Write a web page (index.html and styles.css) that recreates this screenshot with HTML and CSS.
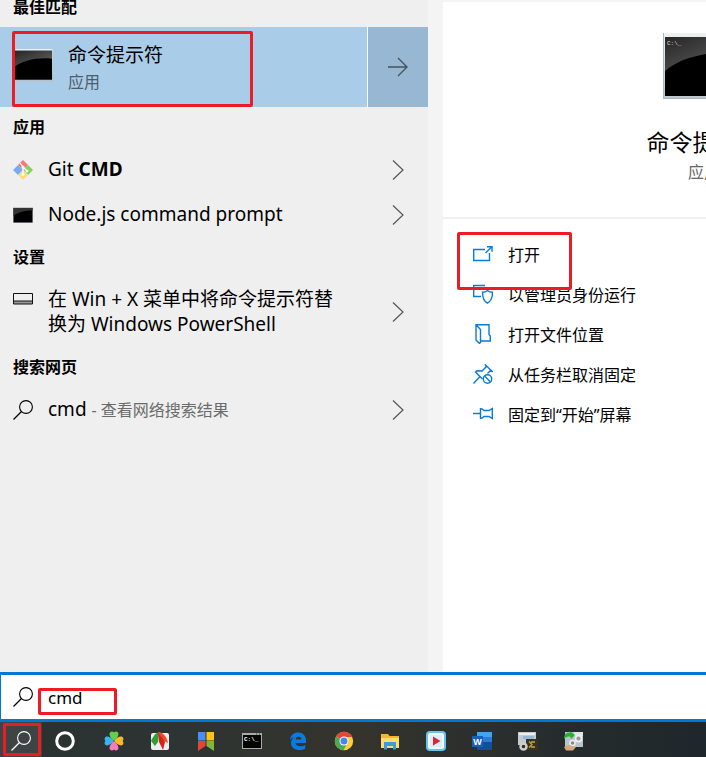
FILE: index.html
```html
<!DOCTYPE html>
<html lang="zh-CN">
<head>
    <meta charset="UTF-8">
    <meta name="viewport" content="width=device-width, initial-scale=1.0">
    <title>搜索</title>
    <link rel="stylesheet" href="styles.css">
</head>
<body>
    <!-- Shared icon shapes -->
    <svg class="sprite" aria-hidden="true">
        <defs>
            <linearGradient id="gloss" x1="0" y1="0" x2="1" y2="1">
                <stop offset="0" stop-color="#262626"/>
                <stop offset="1" stop-color="#666"/>
            </linearGradient>
            <linearGradient id="frame" x1="0" y1="0" x2="0" y2="1">
                <stop offset="0" stop-color="#eef1f2"/>
                <stop offset="1" stop-color="#bcc5cd"/>
            </linearGradient>
        </defs>
        <symbol id="console" viewBox="0 0 82 66">
            <rect width="82" height="66" rx="1" fill="url(#frame)"/>
            <path d="M.5 0v65.5h81V0" fill="none" stroke="#aab5bf"/>
            <path d="M2 4h78v59H2z" fill="#000"/>
            <path d="M2 4h78v16C48 17 18 24 2 38z" fill="url(#gloss)"/>
        </symbol>
        <symbol id="chevron" viewBox="0 0 12 20">
            <path d="M1 .5l10 9.5L1 19.5" fill="none" stroke="#555" stroke-width="1.2"/>
        </symbol>
        <symbol id="search" viewBox="0 0 20 20">
            <circle cx="13" cy="7" r="6.4" fill="none" stroke="currentColor" stroke-width="1.1"/>
            <path d="M8.500 11.500L.5 19.500" fill="none" stroke="currentColor" stroke-width="1.2"/>
        </symbol>
    </svg>

    <main class="panels">
        <!-- Results -->
        <section class="results">
            <h2 class="group-title">最佳匹配</h2>
            <div class="best-match">
                <button class="best-main">
                    <svg class="best-icon"><use href="#console"/></svg>
                    <span class="best-text">
                        <span class="best-name">命令提示符</span>
                        <span class="best-type">应用</span>
                    </span>
                </button>
                <button class="best-arrow" aria-label="展开">
                    <svg width="20" height="20" viewBox="0 0 20 20"><path d="M0 10h19M10 1l9 9-9 9" fill="none" stroke="#44545f" stroke-width="1.4"/></svg>
                </button>
                <span class="mark mark-best"></span>
            </div>

            <h2 class="group-title">应用</h2>
            <button class="result">
                <svg class="icon" viewBox="0 0 20 20">
                    <path d="M10 0l5 5-5 5-5-5z" fill="#f4777b"/>
                    <path d="M5 5l5 5-5 5-5-5z" fill="#76acf7"/>
                    <path d="M15 5l5 5-5 5-5-5z" fill="#82d05e"/>
                    <path d="M10 10l5 5-5 5-5-5z" fill="#fbdc78"/>
                    <path d="M7 3l3 4v8M10 7l4 4" fill="none" stroke="#fff" stroke-width="1.2"/>
                    <circle cx="10" cy="7" r="1.500" fill="#fff"/>
                    <circle cx="14" cy="11" r="1.500" fill="#fff"/>
                    <circle cx="10" cy="14.500" r="1.500" fill="#fff"/>
                </svg>
                <span class="result-text">Git <b>CMD</b></span>
                <svg class="chevron"><use href="#chevron"/></svg>
            </button>
            <button class="result">
                <svg class="icon" viewBox="0 0 20 20">
                    <path d="M0 2h20v16H0z" fill="#c3cad6"/>
                    <path d="M.5 3h19v14.500H.5z" fill="#000"/>
                    <path d="M.5 3h19v2.500C12 5.500 5 7 .5 11z" fill="#333"/>
                </svg>
                <span class="result-text">Node.js command prompt</span>
                <svg class="chevron"><use href="#chevron"/></svg>
            </button>

            <h2 class="group-title">设置</h2>
            <button class="result">
                <svg class="icon icon-top" viewBox="0 0 20 20">
                    <path d="M1 12h18v3H1z" fill="#999"/>
                    <path d="M.5 4.500h19v10.500H.5zM1 12h18" fill="none" stroke="#111"/>
                </svg>
                <span class="result-text">在 Win + X 菜单中将命令提示符替换为 Windows PowerShell</span>
                <svg class="chevron"><use href="#chevron"/></svg>
            </button>

            <h2 class="group-title">搜索网页</h2>
            <button class="result">
                <svg class="icon"><use href="#search"/></svg>
                <span class="result-text">cmd <span class="hint">- 查看网络搜索结果</span></span>
                <svg class="chevron"><use href="#chevron"/></svg>
            </button>
        </section>

        <!-- Selected app -->
        <section class="detail">
            <div class="app">
                <svg class="app-icon" viewBox="0 0 82 66">
                    <use href="#console"/>
                    <text x="4" y="12" font-family="Liberation Mono" font-size="6" fill="#ddd">C:\_</text>
                </svg>
                <h1 class="app-name">命令提示符</h1>
                <p class="app-type">应用</p>
            </div>
            <div class="actions">
                <button class="action">
                    <svg class="icon" viewBox="0 0 20 20"><path d="M12 5.500H.7v11h15.800V9M12.500 9l6-6M14 2.700h5v5"/></svg>
                    打开
                </button>
                <button class="action">
                    <svg class="icon" viewBox="0 0 20 20"><path d="M12 1.500H.7v11H8M16.500 5V3M14.500 6.500c1.500 1.300 3 1.700 5 1.700 0 5-.8 8.800-5 11-4.200-2.200-5-6-5-11 2 0 3.500-.4 5-1.700z"/></svg>
                    以管理员身份运行
                </button>
                <button class="action">
                    <svg class="icon" viewBox="0 0 20 20"><path d="M3 .7h13v9.800l1.300 1.500v5H7.500M3 .7v15.300l3.500 3.500 1-1V5.500L3 .7z"/></svg>
                    打开文件位置
                </button>
                <button class="action">
                    <svg class="icon" viewBox="0 0 20 20"><path d="M.5 19.500l6.500-7M9.500 15L2.500 8l1.500-1.200 5 .2 4-4-.5-2 6.500 6.300-2-.3-2.500 2.500"/><circle cx="14.500" cy="15" r="4.200"/><path d="M11.500 12l6 6"/></svg>
                    从任务栏取消固定
                </button>
                <button class="action">
                    <svg class="icon" viewBox="0 0 20 20"><path d="M0 9.500h7.500M7.500 4v11M7.500 5h1.500l2 1.500h5L19.300 4.500v10L16 12.500h-5l-2 1.500H7.500"/></svg>
                    固定到“开始”屏幕
                </button>
                <span class="mark mark-open"></span>
            </div>
        </section>
    </main>

    <!-- Search box -->
    <div class="search-bar">
        <label for="query" aria-label="搜索"><svg class="icon"><use href="#search"/></svg></label>
        <input id="query" class="search-input" type="text" value="cmd">
        <span class="mark mark-query"></span>
    </div>

    <!-- Taskbar -->
    <nav class="taskbar">
        <button class="task task-search" aria-label="搜索">
            <svg class="icon"><use href="#search"/></svg>
            <span class="mark mark-task"></span>
        </button>
        <button class="task task-cortana" aria-label="Cortana">
            <svg class="icon" viewBox="0 0 20 20"><circle cx="10" cy="10" r="8.300" fill="none" stroke="#fff" stroke-width="3"/></svg>
        </button>
        <button class="task" aria-label="四叶草">
            <svg class="icon" viewBox="0 0 20 20">
                <path d="M10 9.800C7 8 4.500 3.500 6 1.500 7.500 0 9 .5 10 1.500 11 .5 12.500 0 14 1.500 15.500 3.500 13 8 10 9.800z" fill="#63cf4b"/>
                <path d="M9.800 10C8 13 3.500 15.500 1.500 14 0 12.500.5 11 1.500 10 .5 9 0 7.500 1.500 6 3.500 4.500 8 7 9.800 10z" fill="#3bb4ee"/>
                <path d="M10.200 10c1.800-3 6.300-5.500 8.300-4 1.500 1.500 1 3 0 4 1 1 1.500 2.500 0 4-2 1.500-6.500-1-8.300-4z" fill="#f9b928"/>
                <path d="M10 10.200c3 1.800 5.500 6.300 4 8.300-1.500 1.500-3 1-4 0-1 1-2.500 1.500-4 0-1.500-2 1-6.500 4-8.300z" fill="#f77dba"/>
            </svg>
        </button>
        <button class="task" aria-label="录屏">
            <svg class="icon" viewBox="0 0 20 20">
                <rect x="1" y="2" width="18" height="17" rx="2" fill="#eee"/>
                <path d="M1 10C3 6 5 2 9 1l-1 10-3 4z" fill="#28a136"/>
                <path d="M8 1c6 0 9 6 10 11l-6-3z" fill="#f04b2d"/>
                <path d="M8 1l7 10-2 8-4-8z" fill="#d72018"/>
            </svg>
        </button>
        <button class="task" aria-label="书签">
            <svg class="icon" viewBox="0 0 20 20">
                <path d="M2 1h7.500v8.500H2z" fill="#4b8df8"/>
                <path d="M10.500 1H18v8.500h-7.500z" fill="#fdc413"/>
                <path d="M2 10h7.500v5L2 20z" fill="#ea4335"/>
                <path d="M10.500 10H18v10l-7.500-5z" fill="#7bb83c"/>
            </svg>
        </button>
        <button class="task" aria-label="命令提示符">
            <svg class="icon" viewBox="0 0 20 20">
                <path d="M0 2h20v16H0z" fill="#aaa"/>
                <path d="M1 4h18v13H1z" fill="#050505"/>
                <path d="M14 2.500h1v1h-1zM17 2.500h1v1h-1z" fill="#333"/>
                <text x="2" y="10" font-family="Liberation Mono" font-weight="bold" font-size="6" fill="#fff">C:\_</text>
            </svg>
        </button>
        <button class="task" aria-label="Edge">
            <svg class="icon" viewBox="0 0 20 20"><path d="M2 9C2.500 4 6 1.500 10 1.500c5 0 8 3.500 8 8V12H7.500c.2 2.200 2.500 3.300 5 3.300 1.700 0 3.300-.5 4.700-1.300v3.700c-1.700.9-3.700 1.300-5.700 1.300-5 0-8.500-2.700-8.500-7C3 9.300 4.500 7.200 6.800 6 5 6.300 3 7.500 2 9zm5.700-.5h5.600c0-1.700-.9-3-2.700-3s-2.700 1.300-2.900 3z" fill="#0a7be0" fill-rule="evenodd"/></svg>
        </button>
        <button class="task" aria-label="Chrome">
            <svg class="icon" viewBox="0 0 20 20">
                <circle cx="10" cy="10" r="9.200" fill="#fdd033"/>
                <path d="M10 10L2 5.500A9.200 9.200 0 0 1 18.300 6H10z" fill="#e1483b"/>
                <path d="M10 10L2 5.500A9.200 9.200 0 0 0 9.500 19.200l4-7.200z" fill="#4aaa55"/>
                <circle cx="10" cy="10" r="4.500" fill="#fff"/>
                <circle cx="10" cy="10" r="3.500" fill="#4688f1"/>
            </svg>
        </button>
        <button class="task" aria-label="文件资源管理器">
            <svg class="icon" viewBox="0 0 20 20">
                <path d="M1 3h7l1.500 2H19v12H1z" fill="#f4b62c"/>
                <path d="M1 7h18v10H1z" fill="#ffdc70"/>
                <path d="M4 18.500V11h12v7.500h-3V15H7v3.500z" fill="#3d9be0"/>
            </svg>
        </button>
        <button class="task" aria-label="播放器">
            <svg class="icon" viewBox="0 0 20 20">
                <rect x="1" y="1" width="18" height="18" rx="3" fill="#f5f8fc" stroke="#60c8ef" stroke-width="2"/>
                <rect x="4" y="4" width="12" height="12" rx="1" fill="#dcecf8"/>
                <path d="M7 5.500l7.500 4.500L7 14.500z" fill="#dd2434"/>
            </svg>
        </button>
        <button class="task" aria-label="Word">
            <svg class="icon" viewBox="0 0 20 20">
                <path d="M5 1h15v6H5z" fill="#41a5ee"/>
                <path d="M5 6h15v5H5z" fill="#2b7cd3"/>
                <path d="M5 11h15v8H5z" fill="#174b9b"/>
                <path d="M0 5h11v11H0z" fill="#1a5dbe"/>
                <text x="5.500" y="14" text-anchor="middle" font-family="Liberation Sans" font-weight="bold" font-size="9" fill="#fff">W</text>
            </svg>
        </button>
        <button class="task" aria-label="系统配置">
            <svg class="icon" viewBox="0 0 20 20">
                <path d="M0 1h18v13H0z" fill="#c4cbd0"/>
                <path d="M1 2h16v2H1z" fill="#eee"/>
                <path d="M5 5h11v3H5z" fill="#94b9d8"/>
                <path d="M8 8h12v11H8z" fill="#39321f"/>
                <path d="M11 10.500l3 3-3 3M13 11h4M13 16h4" stroke="#c9a83a" stroke-width="1.300" fill="none"/>
                <circle cx="5.500" cy="15.500" r="3" fill="none" stroke="#ccc" stroke-width="2.500"/>
            </svg>
        </button>
        <button class="task" aria-label="注册工具">
            <svg class="icon" viewBox="0 0 20 20">
                <path d="M1 1h18v15H1z" fill="#b7c4cc"/>
                <path d="M10 1h9v4h-9z" fill="#dfe5ea"/>
                <path d="M0 8c0-5 3-7 6-6l-.5-2L11 4 7 8 6.500 6C4 5 2 6 0 8z" fill="#24b52f"/>
                <circle cx="14.500" cy="7.500" r="3" fill="#999" stroke="#eee" stroke-width="1.800"/>
                <circle cx="8.500" cy="12" r="2.500" fill="#888" stroke="#eee" stroke-width="1.500"/>
                <path d="M0 16l5-2 7 2-3 3.500H2z" fill="#d8a87c"/>
            </svg>
        </button>
    </nav>
</body>
</html>
```
FILE: styles.css
```css
* {
    box-sizing: border-box;
}

body {
    margin: 0;
    min-height: 100vh;
    display: flex;
    flex-direction: column;
    font-family: "Noto Sans", "Noto Sans CJK SC", sans-serif;
    font-size: 16px;
    color: #000;
    background-color: #f4f4f4;
    overflow: hidden;
}

button {
    border: none;
    padding: 0;
    background: none;
    font: inherit;
    color: inherit;
    text-align: left;
    cursor: pointer;
}

.sprite {
    position: absolute;
    width: 0;
    height: 0;
}

.icon {
    display: block;
    width: 20px;
    height: 20px;
    flex-shrink: 0;
}

/* Red highlight frames */
.mark {
    position: absolute;
    border: 3px solid #ed1c24;
    border-radius: 2px;
    pointer-events: none;
}

.panels {
    flex: 1;
    display: flex;
    gap: 15px;
    overflow: hidden;
}

/* Results list, scrolled a little under the top edge */
.results {
    width: 428px;
    flex-shrink: 0;
    margin-top: -13px;
    background-color: #efefef;
}

.group-title {
    margin: 0;
    padding-left: 13px;
    font-size: 16px;
    font-weight: bold;
    line-height: 40px;
}

.best-match {
    position: relative;
    display: flex;
    gap: 1px;
    height: 80px;
    background-color: #fff;
}

.best-main {
    flex: 1;
    display: flex;
    align-items: center;
    gap: 15px;
    padding-left: 13px;
    background-color: #a9cce9;
}

.best-icon {
    width: 40px;
    height: 34px;
    margin-bottom: 4px;
}

.best-text {
    display: flex;
    flex-direction: column;
    padding-top: 2px;
}

.best-name {
    font-size: 19px;
    line-height: 28px;
}

.best-type {
    line-height: 26px;
    color: #4d5d6a;
}

.best-arrow {
    width: 60px;
    display: flex;
    align-items: center;
    justify-content: center;
    background-color: #97b7d2;
}

.mark-best {
    left: 12px;
    top: 4px;
    width: 241px;
    height: 76px;
}

.result {
    width: 100%;
    display: flex;
    align-items: center;
    gap: 15px;
    padding: 10px 24px 10px 13px;
    font-size: 19px;
    line-height: 25px;
}

.result-text {
    flex: 1;
    padding-right: 30px;
}

.icon-top {
    align-self: flex-start;
    margin-top: 2px;
}

.hint {
    font-size: 16px;
    color: #6b6b6b;
}

.chevron {
    width: 12px;
    height: 20px;
    flex-shrink: 0;
}

/* Detail pane keeps its width and runs past the window */
.detail {
    flex: 1;
    min-width: 522px;
    margin-top: 2px;
    background-color: #fff;
}

.app {
    display: flex;
    flex-direction: column;
    align-items: center;
    padding: 31px 0 32px;
    border-bottom: 2px solid #f0f0f0;
}

.app-icon {
    width: 82px;
    height: 66px;
}

.app-name {
    margin: 26px 0 0;
    font-size: 23px;
    font-weight: normal;
    line-height: 34px;
}

.app-type {
    margin: 0;
    line-height: 26px;
    color: #666;
}

.actions {
    position: relative;
    display: flex;
    flex-direction: column;
    padding: 15px 30px;
}

.action {
    display: flex;
    align-items: center;
    gap: 15px;
    height: 40px;
}

.action .icon {
    fill: none;
    stroke: #0a7bd8;
    stroke-width: 1.4;
}

.mark-open {
    left: 14px;
    top: 13px;
    width: 115px;
    height: 58px;
}

.search-bar {
    position: relative;
    display: flex;
    align-items: center;
    gap: 15px;
    height: 50px;
    padding-left: 12px;
    border: solid #0078d7;
    border-width: 3px 0 3px 1px;
    background-color: #fff;
}

.search-input {
    flex: 1;
    border: none;
    outline: none;
    padding: 0;
    background: none;
    font: inherit;
    font-size: 17px;
}

.mark-query {
    left: 37px;
    top: 13px;
    width: 79px;
    height: 27px;
}

.taskbar {
    display: flex;
    height: 35px;
    background: linear-gradient(to right, #2a3230, #2d3433 25%, #35332c 50%, #282d2d 75%, #1e272c);
}

.task {
    width: 46px;
    display: flex;
    align-items: center;
    justify-content: center;
    padding-top: 3px;
}

.task-search {
    position: relative;
    width: 42px;
    color: #fff;
    background-color: #3d4443;
}

.task-cortana {
    margin-right: 3px;
}

.mark-task {
    left: 3px;
    top: 1px;
    width: 38px;
    height: 33px;
}
```
